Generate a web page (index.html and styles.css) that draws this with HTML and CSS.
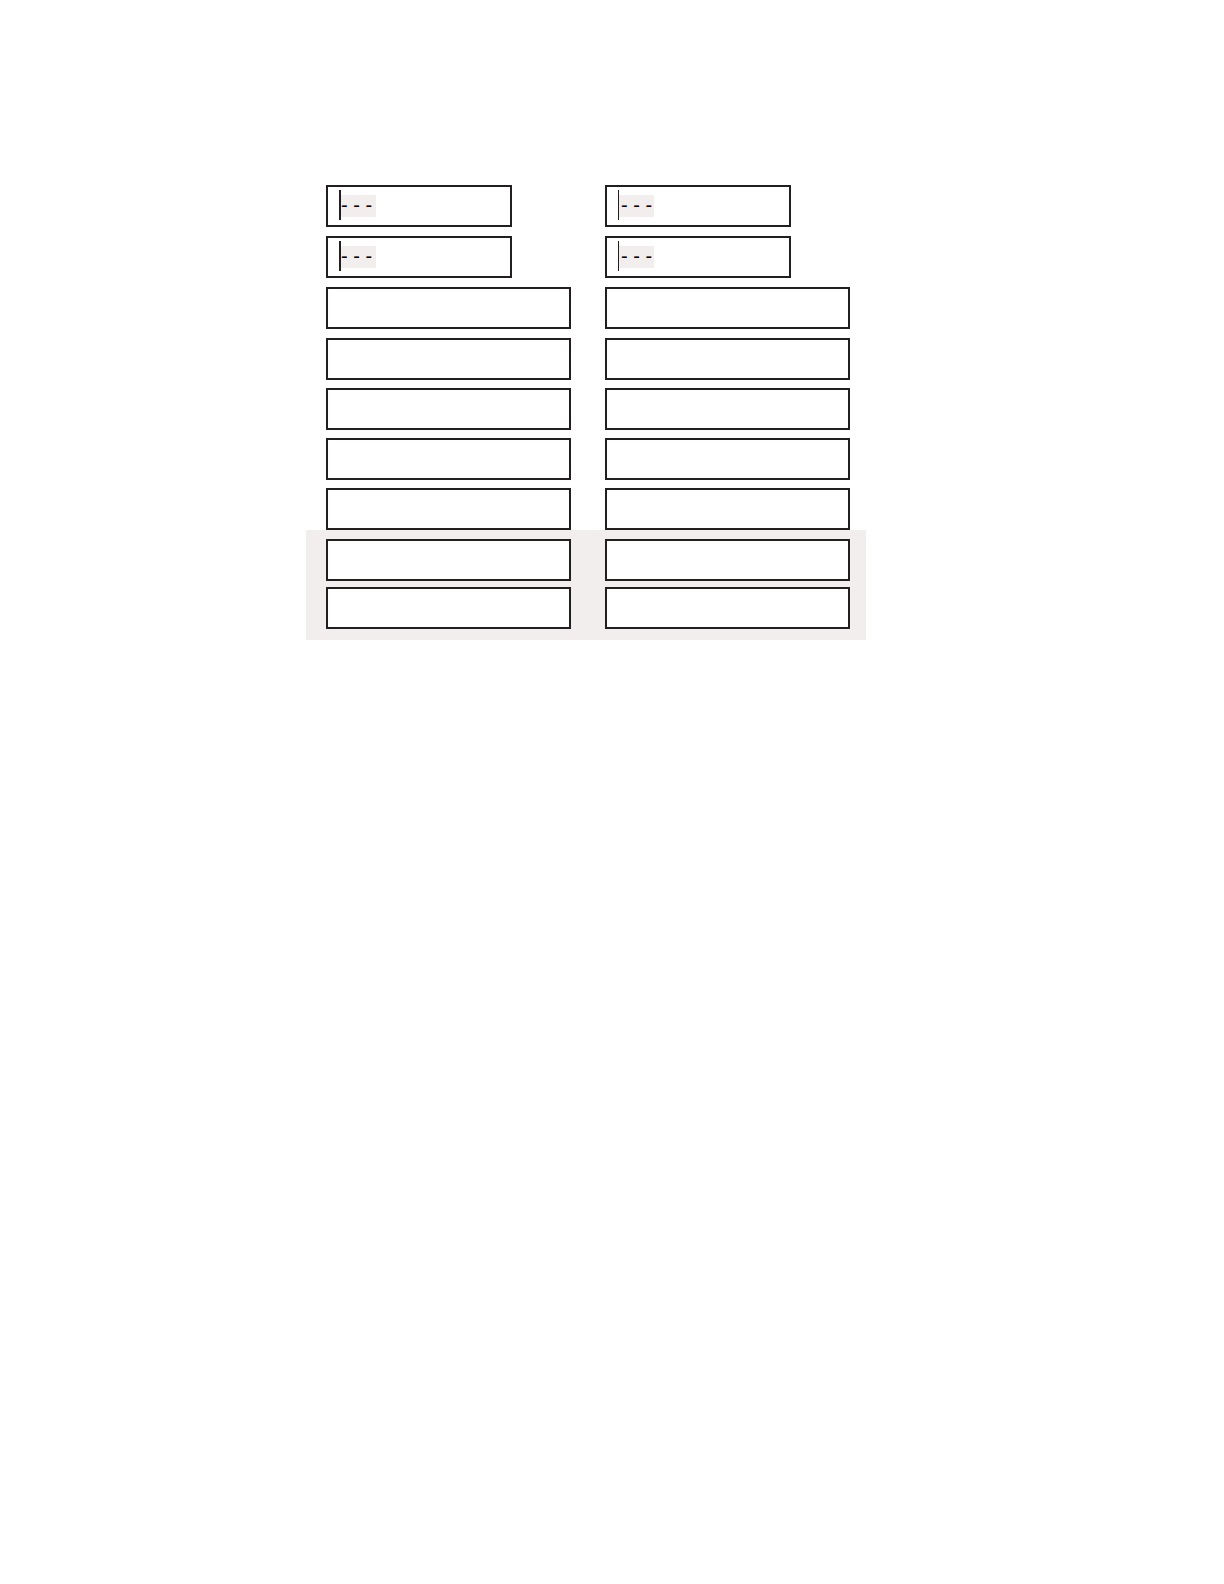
FILE: index.html
```
<!DOCTYPE html>
<html lang="en">
<head>
  <meta charset="UTF-8">
  <title>Form</title>
  <meta name="viewport" content="width=device-width, initial-scale=1">
  <link rel="stylesheet" href="styles.css">
</head>
<body>
  <form class="form">
    <!-- Code fields -->
    <div class="rows">
      <div class="row">
        <label class="field short"><input class="code" type="text" value="- - -" aria-label="Code 1, left"></label>
        <label class="field short"><input class="code thin" type="text" value="- - -" aria-label="Code 1, right"></label>
      </div>
      <div class="row">
        <label class="field short"><input class="code" type="text" value="- - -" aria-label="Code 2, left"></label>
        <label class="field short"><input class="code thin" type="text" value="- - -" aria-label="Code 2, right"></label>
      </div>
      <div class="row">
        <input class="field" type="text" aria-label="Line 3, left">
        <input class="field" type="text" aria-label="Line 3, right">
      </div>
    </div>

    <!-- Plain fields -->
    <div class="rows plain">
      <div class="row">
        <input class="field" type="text" aria-label="Line 4, left">
        <input class="field" type="text" aria-label="Line 4, right">
      </div>
      <div class="row">
        <input class="field" type="text" aria-label="Line 5, left">
        <input class="field" type="text" aria-label="Line 5, right">
      </div>
      <div class="row">
        <input class="field" type="text" aria-label="Line 6, left">
        <input class="field" type="text" aria-label="Line 6, right">
      </div>
      <div class="row">
        <input class="field" type="text" aria-label="Line 7, left">
        <input class="field" type="text" aria-label="Line 7, right">
      </div>
    </div>

    <!-- Shaded fields -->
    <div class="rows shaded">
      <div class="row">
        <input class="field" type="text" aria-label="Line 8, left">
        <input class="field" type="text" aria-label="Line 8, right">
      </div>
      <div class="row">
        <input class="field" type="text" aria-label="Line 9, left">
        <input class="field" type="text" aria-label="Line 9, right">
      </div>
    </div>
  </form>
</body>
</html>
```

FILE: styles.css
```
* {
  box-sizing: border-box;
}

body {
  margin: 0;
  background: #fff;
  color: #231f20;
  font-family: "Liberation Sans", Arial, sans-serif;
}

.form {
  max-width: 560px;
  margin: 185px 0 0 25%;
}

.rows {
  display: flex;
  flex-direction: column;
  gap: 9px;
  padding: 0 16px 0 20px;
}

.plain {
  gap: 8px;
  padding-top: 9px;
}

.shaded {
  gap: 6px;
  padding-top: 9px;
  padding-bottom: 11px;
  background: #f2eeee;
}

.row {
  display: grid;
  grid-template-columns: 1fr 1fr;
  gap: 34px;
}

.field {
  width: 100%;
  height: 42px;
  margin: 0;
  padding: 3px 11px;
  border: 2px solid #231f20;
  border-radius: 0;
  background: #fff;
  font-family: inherit;
  font-size: 20px;
  outline: none;
}

.short {
  display: block;
  width: 76%;
}

/* Cursor bar with the tinted patch behind the dashes */
.code {
  display: block;
  width: 100%;
  height: 30px;
  padding: 0;
  border: 0;
  border-left: 2px solid #231f20;
  background: linear-gradient(#f2eeee, #f2eeee) no-repeat 0 5px / 35px 22px;
  color: #000;
  font-family: inherit;
  font-size: 20px;
  outline: none;
}

.thin {
  padding-left: 2px;
  border-left-width: 1px;
}
```
